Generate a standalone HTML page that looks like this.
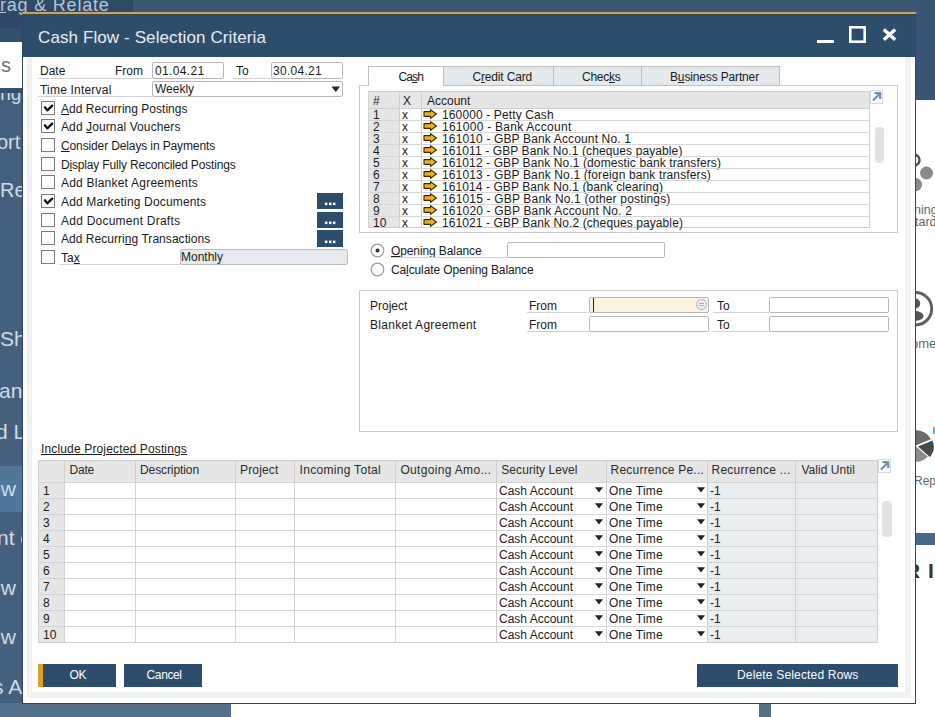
<!DOCTYPE html>
<html><head><meta charset="utf-8"><style>
html,body{margin:0;padding:0;width:935px;height:717px;overflow:hidden;background:#fff}
body{position:relative;font-family:"Liberation Sans", sans-serif}
body>div{position:absolute}
.t{white-space:pre}
u{text-decoration:underline}
</style></head><body>
<div style="left:0px;top:0px;width:935px;height:717px;background:#ffffff"></div>
<div style="left:0px;top:0px;width:935px;height:57px;background:#2e4a68"></div>
<div style="left:133px;top:0px;width:802px;height:12px;background:#3b5775"></div>
<div style="left:0px;top:0px;width:133px;height:12px;background:#2f4b69"></div>
<div style="left:0px;top:57px;width:22px;height:660px;background:#44607c"></div>
<div style="left:0px;top:42px;width:22px;height:46px;background:#ffffff"></div>
<div style="left:0px;top:466px;width:22px;height:46px;background:#4f779c"></div>
<div style="left:0px;top:703px;width:231px;height:14px;background:#54708c"></div>
<div style="left:916px;top:0px;width:19px;height:100px;background:#3a5674"></div>
<div style="left:916px;top:533px;width:19px;height:12px;background:#4a6888"></div>
<div style="left:759px;top:703px;width:12px;height:14px;background:#566f88"></div>
<div style="left:0px;top:28px;width:22px;height:14px;background:#33506e"></div>
<div class="t" style="left:0px;top:-5px;font-size:18px;line-height:20px;color:#b6c6d6;letter-spacing:0.8px">rag &amp; Relate</div>
<div style="left:0px;top:12px;width:6px;height:1px;background:#b6c6d6"></div>
<div class="t" style="left:1px;top:54px;font-size:20px;line-height:22px;color:#707070;">s</div>
<div class="t" style="left:-4px;top:83px;font-size:19px;line-height:21px;color:#d0dbe6;">ing</div>
<div style="left:0px;top:88px;width:22px;height:5px;background:#34506c"></div>
<div class="t" style="left:-3px;top:131px;font-size:20px;line-height:22px;color:#d0dbe6;">ort</div>
<div class="t" style="left:0px;top:179px;font-size:20px;line-height:22px;color:#d0dbe6;">Rep</div>
<div class="t" style="left:0px;top:327px;font-size:21px;line-height:23px;color:#d0dbe6;">Sh</div>
<div class="t" style="left:-1px;top:378.5px;font-size:21px;line-height:23px;color:#d0dbe6;">and</div>
<div class="t" style="left:-4px;top:420px;font-size:21px;line-height:23px;color:#d0dbe6;">d L</div>
<div class="t" style="left:-11px;top:477px;font-size:21px;line-height:23px;color:#d0dbe6;">ow</div>
<div class="t" style="left:-3px;top:526px;font-size:21px;line-height:23px;color:#d0dbe6;">nt c</div>
<div class="t" style="left:-11px;top:576px;font-size:21px;line-height:23px;color:#d0dbe6;">ow</div>
<div class="t" style="left:-11px;top:625px;font-size:21px;line-height:23px;color:#d0dbe6;">ow</div>
<div class="t" style="left:-7px;top:675px;font-size:21px;line-height:23px;color:#d0dbe6;">s A</div>
<svg style="position:absolute;left:900px;top:145px" width="35" height="50"><circle cx="14" cy="15" r="5.5" fill="none" stroke="#555" stroke-width="2.5"/><circle cx="26.5" cy="28" r="6.5" fill="#8a8a8a"/><circle cx="15.6" cy="39.6" r="6.5" fill="#8a8a8a"/></svg>
<div class="t" style="left:914px;top:203px;font-size:12.5px;line-height:14px;color:#666;">ning</div>
<div class="t" style="left:915px;top:215px;font-size:12.5px;line-height:14px;color:#666;">tard</div>
<svg style="position:absolute;left:895px;top:288px" width="40" height="42"><circle cx="20.5" cy="20.7" r="16.2" fill="none" stroke="#606060" stroke-width="3"/><circle cx="20" cy="15.4" r="5.2" fill="#555"/><ellipse cx="20" cy="28" rx="8.5" ry="5" fill="#555"/></svg>
<div class="t" style="left:911px;top:335.5px;font-size:13px;line-height:15px;color:#666;">ome</div>
<svg style="position:absolute;left:895px;top:425px" width="40" height="45"><path d="M21.5 21 L5 21 A16.5 16.5 0 0 1 36.8 14.8 Z" fill="#6a6a6a" stroke="#fff" stroke-width="1.5"/><path d="M21.5 21 L34.1 31.6 A16.5 16.5 0 0 1 5 21 Z" fill="#8c8c8c" stroke="#fff" stroke-width="1.5"/><path d="M23 21.5 L37.5 15.5 A16 16 0 0 1 34.8 32 Z" fill="#484848"/><rect x="38" y="2" width="2" height="7" fill="#5aaee0"/></svg>
<div class="t" style="left:914px;top:473.5px;font-size:12px;line-height:14px;color:#666;">Repo</div>
<div class="t" style="left:905px;top:558.5px;font-size:21px;line-height:23px;color:#333;font-weight:bold">R</div>
<div class="t" style="left:928px;top:558.5px;font-size:21px;line-height:23px;color:#333;font-weight:bold">In</div>
<div style="left:22px;top:13px;width:894px;height:691px;background:#2a4664"></div>
<div style="left:23px;top:14px;width:892px;height:43px;background:#2d4d6c"></div>
<div style="left:22px;top:12px;width:894px;height:2px;background:#d9a534"></div>
<div style="left:23px;top:57px;width:892px;height:646px;background:#ffffff"></div>
<div style="left:27px;top:57px;width:5px;height:641px;background:#f2f2f2"></div>
<div style="left:905px;top:57px;width:6px;height:641px;background:#f2f2f2"></div>
<div style="left:27px;top:692px;width:884px;height:6px;background:#f2f2f2"></div>
<div style="left:32px;top:57px;width:873px;height:635px;background:#ffffff"></div>
<div class="t" style="left:38px;top:28px;font-size:17px;line-height:19px;color:#e8eef4;;letter-spacing:0.105px">Cash Flow - Selection Criteria</div>
<div style="left:817px;top:40px;width:17px;height:3px;background:#ffffff"></div>
<svg style="position:absolute;left:848px;top:25px" width="19" height="19"><rect x="2.3" y="2.3" width="14.4" height="14.4" fill="none" stroke="#fff" stroke-width="2.6"/></svg>
<svg style="position:absolute;left:882px;top:28px" width="15" height="13"><path d="M1.8 1.5 L13.2 11.8 M13.2 1.5 L1.8 11.8" stroke="#fff" stroke-width="3.4"/></svg>
<div class="t" style="left:40px;top:64px;font-size:12px;line-height:14px;color:#1b1b1b;">Date</div>
<div class="t" style="left:115px;top:64px;font-size:12px;line-height:14px;color:#1b1b1b;">From</div>
<div style="left:38px;top:78px;width:114px;height:1px;background:#d2d2d2"></div>
<div style="left:152px;top:62px;width:72px;height:17px;background:#fff;border:1px solid #b8b8b8;box-sizing:border-box;border-radius:2px"></div>
<div class="t" style="left:155px;top:64px;font-size:12px;line-height:14px;color:#1b1b1b;;letter-spacing:0.348px">01.04.21</div>
<div class="t" style="left:236px;top:64px;font-size:12px;line-height:14px;color:#1b1b1b;">To</div>
<div style="left:233px;top:78px;width:38px;height:1px;background:#d2d2d2"></div>
<div style="left:271px;top:62px;width:72px;height:17px;background:#fff;border:1px solid #b8b8b8;box-sizing:border-box;border-radius:2px"></div>
<div class="t" style="left:273px;top:64px;font-size:12px;line-height:14px;color:#1b1b1b;;letter-spacing:0.285px">30.04.21</div>
<div class="t" style="left:40px;top:83px;font-size:12px;line-height:14px;color:#1b1b1b;;letter-spacing:0.200px">Time Interval</div>
<div style="left:38px;top:96px;width:114px;height:1px;background:#d2d2d2"></div>
<div style="left:152px;top:81px;width:191px;height:16px;background:#fff;border:1px solid #b8b8b8;box-sizing:border-box;border-radius:2px"></div>
<div class="t" style="left:155px;top:82px;font-size:12px;line-height:14px;color:#1b1b1b;">Weekly</div>
<svg style="position:absolute;left:331px;top:86px" width="10" height="7"><path d="M0.5 0.5 L9 0.5 L4.75 6 Z" fill="#222"/></svg>
<div style="left:41px;top:101px;width:14px;height:14px;background:#fff;border:1px solid #7a7a7a;box-sizing:border-box"></div>
<svg style="position:absolute;left:41px;top:101px" width="14" height="14"><path d="M3.9 6.3 L6.3 9.4 L11.2 4.6" fill="none" stroke="#111" stroke-width="2.3" stroke-linecap="round" stroke-linejoin="round"/></svg>
<div class="t" style="left:61px;top:102px;font-size:12px;line-height:14px;color:#1b1b1b;;letter-spacing:0.019px"><u>A</u>dd Recurring Postings</div>
<div style="left:41px;top:119px;width:14px;height:14px;background:#fff;border:1px solid #7a7a7a;box-sizing:border-box"></div>
<svg style="position:absolute;left:41px;top:119px" width="14" height="14"><path d="M3.9 6.3 L6.3 9.4 L11.2 4.6" fill="none" stroke="#111" stroke-width="2.3" stroke-linecap="round" stroke-linejoin="round"/></svg>
<div class="t" style="left:61px;top:120px;font-size:12px;line-height:14px;color:#1b1b1b;;letter-spacing:0.104px">Add <u>J</u>ournal Vouchers</div>
<div style="left:41px;top:138px;width:14px;height:14px;background:#fff;border:1px solid #7a7a7a;box-sizing:border-box"></div>
<div class="t" style="left:61px;top:139px;font-size:12px;line-height:14px;color:#1b1b1b;;letter-spacing:-0.126px"><u>C</u>onsider Delays in Payments</div>
<div style="left:41px;top:157px;width:14px;height:14px;background:#fff;border:1px solid #7a7a7a;box-sizing:border-box"></div>
<div class="t" style="left:61px;top:158px;font-size:12px;line-height:14px;color:#1b1b1b;;letter-spacing:-0.170px">D<u>i</u>splay Fully Reconciled Postings</div>
<div style="left:41px;top:175px;width:14px;height:14px;background:#fff;border:1px solid #7a7a7a;box-sizing:border-box"></div>
<div class="t" style="left:61px;top:176px;font-size:12px;line-height:14px;color:#1b1b1b;;letter-spacing:0.223px">Add Blanket Agreements</div>
<div style="left:41px;top:194px;width:14px;height:14px;background:#fff;border:1px solid #7a7a7a;box-sizing:border-box"></div>
<svg style="position:absolute;left:41px;top:194px" width="14" height="14"><path d="M3.9 6.3 L6.3 9.4 L11.2 4.6" fill="none" stroke="#111" stroke-width="2.3" stroke-linecap="round" stroke-linejoin="round"/></svg>
<div class="t" style="left:61px;top:195px;font-size:12px;line-height:14px;color:#1b1b1b;;letter-spacing:0.169px">Add Marketing Documents</div>
<div style="left:41px;top:213px;width:14px;height:14px;background:#fff;border:1px solid #7a7a7a;box-sizing:border-box"></div>
<div class="t" style="left:61px;top:214px;font-size:12px;line-height:14px;color:#1b1b1b;;letter-spacing:0.236px">Add Document Drafts</div>
<div style="left:41px;top:231px;width:14px;height:14px;background:#fff;border:1px solid #7a7a7a;box-sizing:border-box"></div>
<div class="t" style="left:61px;top:232px;font-size:12px;line-height:14px;color:#1b1b1b;;letter-spacing:0.043px">Add Recurri<u>n</u>g Transactions</div>
<div style="left:41px;top:250px;width:14px;height:14px;background:#fff;border:1px solid #7a7a7a;box-sizing:border-box"></div>
<div class="t" style="left:61px;top:251px;font-size:12px;line-height:14px;color:#1b1b1b;">Ta<u>x</u></div>
<div style="left:60px;top:264px;width:120px;height:1px;background:#d2d2d2"></div>
<div style="left:317px;top:193px;width:26px;height:16px;background:#2d4d6c"></div>
<svg style="position:absolute;left:324px;top:202px" width="12" height="4"><rect x="0.9" y="0.6" width="2.5" height="2.5" fill="#fff"/><rect x="5" y="0.6" width="2.5" height="2.5" fill="#fff"/><rect x="8.9" y="0.6" width="2.5" height="2.5" fill="#fff"/></svg>
<div style="left:317px;top:212px;width:26px;height:16px;background:#2d4d6c"></div>
<svg style="position:absolute;left:324px;top:221px" width="12" height="4"><rect x="0.9" y="0.6" width="2.5" height="2.5" fill="#fff"/><rect x="5" y="0.6" width="2.5" height="2.5" fill="#fff"/><rect x="8.9" y="0.6" width="2.5" height="2.5" fill="#fff"/></svg>
<div style="left:317px;top:230px;width:26px;height:17px;background:#2d4d6c"></div>
<svg style="position:absolute;left:324px;top:240px" width="12" height="4"><rect x="0.9" y="0.6" width="2.5" height="2.5" fill="#fff"/><rect x="5" y="0.6" width="2.5" height="2.5" fill="#fff"/><rect x="8.9" y="0.6" width="2.5" height="2.5" fill="#fff"/></svg>
<div style="left:180px;top:249px;width:168px;height:16px;background:#e6eaee;border:1px solid #b8bcc0;box-sizing:border-box;border-radius:2px"></div>
<div class="t" style="left:181px;top:250px;font-size:12px;line-height:14px;color:#1b1b1b;">Monthly</div>
<div style="left:359px;top:85px;width:539px;height:148px;border:1px solid #c8c8c8;box-sizing:border-box;background:#fff"></div>
<div style="left:443px;top:66px;width:111px;height:20px;background:#e4e9ee;border:1px solid #c0c0c0;box-sizing:border-box"></div>
<div class="t" style="left:472.5px;top:70px;font-size:12px;line-height:14px;color:#1b1b1b;;letter-spacing:-0.170px">C<u>r</u>edit Card</div>
<div style="left:553px;top:66px;width:89px;height:20px;background:#e4e9ee;border:1px solid #c0c0c0;box-sizing:border-box"></div>
<div class="t" style="left:582px;top:70px;font-size:12px;line-height:14px;color:#1b1b1b;;letter-spacing:-0.253px">Chec<u>k</u>s</div>
<div style="left:641px;top:66px;width:139px;height:20px;background:#e4e9ee;border:1px solid #c0c0c0;box-sizing:border-box"></div>
<div class="t" style="left:670px;top:70px;font-size:12px;line-height:14px;color:#1b1b1b;;letter-spacing:-0.150px">B<u>u</u>siness Partner</div>
<div style="left:368px;top:66px;width:76px;height:20px;background:#fff;border:1px solid #c0c0c0;border-bottom:none;box-sizing:border-box"></div>
<div style="left:369px;top:85px;width:74px;height:1px;background:#fff"></div>
<div class="t" style="left:398.5px;top:70px;font-size:12px;line-height:14px;color:#1b1b1b;;letter-spacing:-0.883px">Ca<u>s</u>h</div>
<div style="left:368px;top:91px;width:502px;height:17px;background:#e6e6e6"></div>
<div style="left:368px;top:108px;width:31px;height:120px;background:#e6e6e6"></div>
<div style="left:368px;top:91px;width:502px;height:137px;border:1px solid #d0d0d0;box-sizing:border-box"></div>
<div style="left:399px;top:91px;width:1px;height:137px;background:#d0d0d0"></div>
<div style="left:421px;top:91px;width:1px;height:137px;background:#d0d0d0"></div>
<div style="left:368px;top:108px;width:502px;height:1px;background:#d0d0d0"></div>
<div class="t" style="left:373px;top:94px;font-size:12px;line-height:14px;color:#1b1b1b;">#</div>
<div class="t" style="left:403px;top:94px;font-size:12px;line-height:14px;color:#1b1b1b;">X</div>
<div class="t" style="left:427px;top:94px;font-size:12px;line-height:14px;color:#1b1b1b;">Account</div>
<div class="t" style="left:373px;top:108px;font-size:12px;line-height:14px;color:#1b1b1b;">1</div>
<div class="t" style="left:402px;top:108px;font-size:12px;line-height:14px;color:#1b1b1b;">x</div>
<svg style="position:absolute;left:423px;top:109px" width="15" height="11"><path d="M1 2.6 L7.6 2.6 L7.6 0.6 L13.4 5 L7.6 9.4 L7.6 7.4 L1 7.4 Z" fill="#f2ae14" stroke="#3a2c08" stroke-width="1.1" stroke-linejoin="round"/></svg>
<div class="t" style="left:442px;top:108px;font-size:12px;line-height:14px;color:#1b1b1b;;letter-spacing:0.126px">160000 - Petty Cash</div>
<div style="left:368px;top:120px;width:502px;height:1px;background:#d6d6d6"></div>
<div class="t" style="left:373px;top:120px;font-size:12px;line-height:14px;color:#1b1b1b;">2</div>
<div class="t" style="left:402px;top:120px;font-size:12px;line-height:14px;color:#1b1b1b;">x</div>
<svg style="position:absolute;left:423px;top:121px" width="15" height="11"><path d="M1 2.6 L7.6 2.6 L7.6 0.6 L13.4 5 L7.6 9.4 L7.6 7.4 L1 7.4 Z" fill="#f2ae14" stroke="#3a2c08" stroke-width="1.1" stroke-linejoin="round"/></svg>
<div class="t" style="left:442px;top:120px;font-size:12px;line-height:14px;color:#1b1b1b;;letter-spacing:0.257px">161000 - Bank Account</div>
<div style="left:368px;top:132px;width:502px;height:1px;background:#d6d6d6"></div>
<div class="t" style="left:373px;top:132px;font-size:12px;line-height:14px;color:#1b1b1b;">3</div>
<div class="t" style="left:402px;top:132px;font-size:12px;line-height:14px;color:#1b1b1b;">x</div>
<svg style="position:absolute;left:423px;top:133px" width="15" height="11"><path d="M1 2.6 L7.6 2.6 L7.6 0.6 L13.4 5 L7.6 9.4 L7.6 7.4 L1 7.4 Z" fill="#f2ae14" stroke="#3a2c08" stroke-width="1.1" stroke-linejoin="round"/></svg>
<div class="t" style="left:442px;top:132px;font-size:12px;line-height:14px;color:#1b1b1b;;letter-spacing:0.143px">161010 - GBP Bank Account No. 1</div>
<div style="left:368px;top:144px;width:502px;height:1px;background:#d6d6d6"></div>
<div class="t" style="left:373px;top:144px;font-size:12px;line-height:14px;color:#1b1b1b;">4</div>
<div class="t" style="left:402px;top:144px;font-size:12px;line-height:14px;color:#1b1b1b;">x</div>
<svg style="position:absolute;left:423px;top:145px" width="15" height="11"><path d="M1 2.6 L7.6 2.6 L7.6 0.6 L13.4 5 L7.6 9.4 L7.6 7.4 L1 7.4 Z" fill="#f2ae14" stroke="#3a2c08" stroke-width="1.1" stroke-linejoin="round"/></svg>
<div class="t" style="left:442px;top:144px;font-size:12px;line-height:14px;color:#1b1b1b;;letter-spacing:0.103px">161011 - GBP Bank No.1 (cheques payable)</div>
<div style="left:368px;top:156px;width:502px;height:1px;background:#d6d6d6"></div>
<div class="t" style="left:373px;top:156px;font-size:12px;line-height:14px;color:#1b1b1b;">5</div>
<div class="t" style="left:402px;top:156px;font-size:12px;line-height:14px;color:#1b1b1b;">x</div>
<svg style="position:absolute;left:423px;top:157px" width="15" height="11"><path d="M1 2.6 L7.6 2.6 L7.6 0.6 L13.4 5 L7.6 9.4 L7.6 7.4 L1 7.4 Z" fill="#f2ae14" stroke="#3a2c08" stroke-width="1.1" stroke-linejoin="round"/></svg>
<div class="t" style="left:442px;top:156px;font-size:12px;line-height:14px;color:#1b1b1b;;letter-spacing:0.106px">161012 - GBP Bank No.1 (domestic bank transfers)</div>
<div style="left:368px;top:168px;width:502px;height:1px;background:#d6d6d6"></div>
<div class="t" style="left:373px;top:168px;font-size:12px;line-height:14px;color:#1b1b1b;">6</div>
<div class="t" style="left:402px;top:168px;font-size:12px;line-height:14px;color:#1b1b1b;">x</div>
<svg style="position:absolute;left:423px;top:169px" width="15" height="11"><path d="M1 2.6 L7.6 2.6 L7.6 0.6 L13.4 5 L7.6 9.4 L7.6 7.4 L1 7.4 Z" fill="#f2ae14" stroke="#3a2c08" stroke-width="1.1" stroke-linejoin="round"/></svg>
<div class="t" style="left:442px;top:168px;font-size:12px;line-height:14px;color:#1b1b1b;;letter-spacing:0.136px">161013 - GBP Bank No.1 (foreign bank transfers)</div>
<div style="left:368px;top:180px;width:502px;height:1px;background:#d6d6d6"></div>
<div class="t" style="left:373px;top:180px;font-size:12px;line-height:14px;color:#1b1b1b;">7</div>
<div class="t" style="left:402px;top:180px;font-size:12px;line-height:14px;color:#1b1b1b;">x</div>
<svg style="position:absolute;left:423px;top:181px" width="15" height="11"><path d="M1 2.6 L7.6 2.6 L7.6 0.6 L13.4 5 L7.6 9.4 L7.6 7.4 L1 7.4 Z" fill="#f2ae14" stroke="#3a2c08" stroke-width="1.1" stroke-linejoin="round"/></svg>
<div class="t" style="left:442px;top:180px;font-size:12px;line-height:14px;color:#1b1b1b;;letter-spacing:0.081px">161014 - GBP Bank No.1 (bank clearing)</div>
<div style="left:368px;top:192px;width:502px;height:1px;background:#d6d6d6"></div>
<div class="t" style="left:373px;top:192px;font-size:12px;line-height:14px;color:#1b1b1b;">8</div>
<div class="t" style="left:402px;top:192px;font-size:12px;line-height:14px;color:#1b1b1b;">x</div>
<svg style="position:absolute;left:423px;top:193px" width="15" height="11"><path d="M1 2.6 L7.6 2.6 L7.6 0.6 L13.4 5 L7.6 9.4 L7.6 7.4 L1 7.4 Z" fill="#f2ae14" stroke="#3a2c08" stroke-width="1.1" stroke-linejoin="round"/></svg>
<div class="t" style="left:442px;top:192px;font-size:12px;line-height:14px;color:#1b1b1b;;letter-spacing:0.169px">161015 - GBP Bank No.1 (other postings)</div>
<div style="left:368px;top:204px;width:502px;height:1px;background:#d6d6d6"></div>
<div class="t" style="left:373px;top:204px;font-size:12px;line-height:14px;color:#1b1b1b;">9</div>
<div class="t" style="left:402px;top:204px;font-size:12px;line-height:14px;color:#1b1b1b;">x</div>
<svg style="position:absolute;left:423px;top:205px" width="15" height="11"><path d="M1 2.6 L7.6 2.6 L7.6 0.6 L13.4 5 L7.6 9.4 L7.6 7.4 L1 7.4 Z" fill="#f2ae14" stroke="#3a2c08" stroke-width="1.1" stroke-linejoin="round"/></svg>
<div class="t" style="left:442px;top:204px;font-size:12px;line-height:14px;color:#1b1b1b;;letter-spacing:0.175px">161020 - GBP Bank Account No. 2</div>
<div style="left:368px;top:216px;width:502px;height:1px;background:#d6d6d6"></div>
<div class="t" style="left:373px;top:216px;font-size:12px;line-height:14px;color:#1b1b1b;">10</div>
<div class="t" style="left:402px;top:216px;font-size:12px;line-height:14px;color:#1b1b1b;">x</div>
<svg style="position:absolute;left:423px;top:217px" width="15" height="11"><path d="M1 2.6 L7.6 2.6 L7.6 0.6 L13.4 5 L7.6 9.4 L7.6 7.4 L1 7.4 Z" fill="#f2ae14" stroke="#3a2c08" stroke-width="1.1" stroke-linejoin="round"/></svg>
<div class="t" style="left:442px;top:216px;font-size:12px;line-height:14px;color:#1b1b1b;;letter-spacing:0.093px">161021 - GBP Bank No.2 (cheques payable)</div>
<svg style="position:absolute;left:870px;top:90px" width="13" height="14"><rect x="0.5" y="0.5" width="12" height="13" fill="#fff" stroke="#d4dae0"/><path d="M3 10.5 L9.5 4 M4.5 3.2 L10.2 3.2 L10.2 9" fill="none" stroke="#6f8fae" stroke-width="2.2"/></svg>
<div style="left:875px;top:127px;width:9px;height:36px;background:#e2e2e2;border-radius:4px"></div>
<svg style="position:absolute;left:370px;top:243px" width="15" height="15"><circle cx="7.5" cy="7.5" r="6.3" fill="#fff" stroke="#9c9c9c" stroke-width="1.2"/><circle cx="7.5" cy="7.5" r="2" fill="#333"/></svg>
<svg style="position:absolute;left:370px;top:262px" width="15" height="15"><circle cx="7.5" cy="7.5" r="6.3" fill="#fff" stroke="#9c9c9c" stroke-width="1.2"/></svg>
<div class="t" style="left:391px;top:244px;font-size:12px;line-height:14px;color:#1b1b1b;;letter-spacing:-0.105px"><u>O</u>pening Balance</div>
<div style="left:391px;top:257px;width:116px;height:1px;background:#d2d2d2"></div>
<div style="left:507px;top:242px;width:158px;height:16px;background:#fff;border:1px solid #b8b8b8;box-sizing:border-box;border-radius:2px"></div>
<div class="t" style="left:391px;top:263px;font-size:12px;line-height:14px;color:#1b1b1b;;letter-spacing:-0.118px">Ca<u>l</u>culate Opening Balance</div>
<div style="left:359px;top:290px;width:539px;height:142px;border:1px solid #c8c8c8;box-sizing:border-box"></div>
<div class="t" style="left:370px;top:299px;font-size:12px;line-height:14px;color:#1b1b1b;">Project</div>
<div class="t" style="left:370px;top:318px;font-size:12px;line-height:14px;color:#1b1b1b;;letter-spacing:0.300px">Blanket Agreement</div>
<div class="t" style="left:529px;top:299px;font-size:12px;line-height:14px;color:#1b1b1b;">From</div>
<div class="t" style="left:529px;top:318px;font-size:12px;line-height:14px;color:#1b1b1b;">From</div>
<div style="left:527px;top:312px;width:62px;height:1px;background:#d2d2d2"></div>
<div style="left:527px;top:331px;width:62px;height:1px;background:#d2d2d2"></div>
<div style="left:589px;top:297px;width:120px;height:16px;background:#fcf3df;border:1px solid #b8b8b8;box-sizing:border-box;border-radius:2px"></div>
<div style="left:593px;top:298px;width:1px;height:14px;background:#222"></div>
<svg style="position:absolute;left:695px;top:298px" width="13" height="13"><circle cx="6.5" cy="6.5" r="5" fill="#eef0f2" stroke="#a8b0b8"/><path d="M4 5.5 H9 M4 7.5 H9" stroke="#a8b0b8"/></svg>
<div style="left:589px;top:316px;width:120px;height:16px;background:#fff;border:1px solid #b8b8b8;box-sizing:border-box;border-radius:2px"></div>
<div class="t" style="left:717px;top:299px;font-size:12px;line-height:14px;color:#1b1b1b;">To</div>
<div class="t" style="left:717px;top:318px;font-size:12px;line-height:14px;color:#1b1b1b;">To</div>
<div style="left:713px;top:312px;width:56px;height:1px;background:#d2d2d2"></div>
<div style="left:713px;top:331px;width:56px;height:1px;background:#d2d2d2"></div>
<div style="left:769px;top:297px;width:120px;height:16px;background:#fff;border:1px solid #b8b8b8;box-sizing:border-box;border-radius:2px"></div>
<div style="left:769px;top:316px;width:120px;height:16px;background:#fff;border:1px solid #b8b8b8;box-sizing:border-box;border-radius:2px"></div>
<div class="t" style="left:41px;top:442px;font-size:12px;line-height:14px;color:#1b1b1b;text-decoration:underline;letter-spacing:0.150px">Include Projected Postings</div>
<div style="left:38px;top:460px;width:840px;height:22px;background:#e6e6e6"></div>
<div style="left:38px;top:482px;width:26px;height:160px;background:#e6e6e6"></div>
<div style="left:708px;top:482px;width:170px;height:160px;background:#e8edf2"></div>
<div style="left:38px;top:460px;width:840px;height:183px;border:1px solid #cfcfcf;box-sizing:border-box"></div>
<div style="left:64px;top:460px;width:1px;height:183px;background:#d0d0d0"></div>
<div style="left:135px;top:460px;width:1px;height:183px;background:#d0d0d0"></div>
<div style="left:235px;top:460px;width:1px;height:183px;background:#d0d0d0"></div>
<div style="left:294px;top:460px;width:1px;height:183px;background:#d0d0d0"></div>
<div style="left:395px;top:460px;width:1px;height:183px;background:#d0d0d0"></div>
<div style="left:496px;top:460px;width:1px;height:183px;background:#d0d0d0"></div>
<div style="left:606px;top:460px;width:1px;height:183px;background:#d0d0d0"></div>
<div style="left:707px;top:460px;width:1px;height:183px;background:#d0d0d0"></div>
<div style="left:795px;top:460px;width:1px;height:183px;background:#d0d0d0"></div>
<div class="t" style="left:69.5px;top:463px;font-size:12px;line-height:14px;color:#2a2a2a;;letter-spacing:-0.215px">Date</div>
<div class="t" style="left:140px;top:463px;font-size:12px;line-height:14px;color:#2a2a2a;;letter-spacing:-0.094px">Description</div>
<div class="t" style="left:240px;top:463px;font-size:12px;line-height:14px;color:#2a2a2a;;letter-spacing:0.163px">Project</div>
<div class="t" style="left:299.5px;top:463px;font-size:12px;line-height:14px;color:#2a2a2a;;letter-spacing:0.310px">Incoming Total</div>
<div class="t" style="left:400.4px;top:463px;font-size:12px;line-height:14px;color:#2a2a2a;;letter-spacing:0.329px">Outgoing Amo...</div>
<div class="t" style="left:501.3px;top:463px;font-size:12px;line-height:14px;color:#2a2a2a;;letter-spacing:0.066px">Security Level</div>
<div class="t" style="left:610.6px;top:463px;font-size:12px;line-height:14px;color:#2a2a2a;;letter-spacing:0.210px">Recurrence Pe...</div>
<div class="t" style="left:711.5px;top:463px;font-size:12px;line-height:14px;color:#2a2a2a;;letter-spacing:0.259px">Recurrence ...</div>
<div class="t" style="left:801.4px;top:463px;font-size:12px;line-height:14px;color:#2a2a2a;;letter-spacing:0.042px">Valid Until</div>
<div style="left:38px;top:482px;width:840px;height:1px;background:#d4d4d4"></div>
<div class="t" style="left:43px;top:484px;font-size:12px;line-height:14px;color:#1b1b1b;">1</div>
<div class="t" style="left:499px;top:484px;font-size:12px;line-height:14px;color:#1b1b1b;">Cash Account</div>
<svg style="position:absolute;left:595px;top:487px" width="9" height="6"><path d="M0 0.3 L8 0.3 L4 5.5 Z" fill="#222"/></svg>
<div class="t" style="left:609px;top:484px;font-size:12px;line-height:14px;color:#1b1b1b;;letter-spacing:0.246px">One Time</div>
<svg style="position:absolute;left:697px;top:487px" width="9" height="6"><path d="M0 0.3 L8 0.3 L4 5.5 Z" fill="#222"/></svg>
<div class="t" style="left:710px;top:484px;font-size:12px;line-height:14px;color:#1b1b1b;">-1</div>
<div style="left:38px;top:498px;width:840px;height:1px;background:#d4d4d4"></div>
<div class="t" style="left:43px;top:500px;font-size:12px;line-height:14px;color:#1b1b1b;">2</div>
<div class="t" style="left:499px;top:500px;font-size:12px;line-height:14px;color:#1b1b1b;">Cash Account</div>
<svg style="position:absolute;left:595px;top:503px" width="9" height="6"><path d="M0 0.3 L8 0.3 L4 5.5 Z" fill="#222"/></svg>
<div class="t" style="left:609px;top:500px;font-size:12px;line-height:14px;color:#1b1b1b;;letter-spacing:0.246px">One Time</div>
<svg style="position:absolute;left:697px;top:503px" width="9" height="6"><path d="M0 0.3 L8 0.3 L4 5.5 Z" fill="#222"/></svg>
<div class="t" style="left:710px;top:500px;font-size:12px;line-height:14px;color:#1b1b1b;">-1</div>
<div style="left:38px;top:514px;width:840px;height:1px;background:#d4d4d4"></div>
<div class="t" style="left:43px;top:516px;font-size:12px;line-height:14px;color:#1b1b1b;">3</div>
<div class="t" style="left:499px;top:516px;font-size:12px;line-height:14px;color:#1b1b1b;">Cash Account</div>
<svg style="position:absolute;left:595px;top:519px" width="9" height="6"><path d="M0 0.3 L8 0.3 L4 5.5 Z" fill="#222"/></svg>
<div class="t" style="left:609px;top:516px;font-size:12px;line-height:14px;color:#1b1b1b;;letter-spacing:0.246px">One Time</div>
<svg style="position:absolute;left:697px;top:519px" width="9" height="6"><path d="M0 0.3 L8 0.3 L4 5.5 Z" fill="#222"/></svg>
<div class="t" style="left:710px;top:516px;font-size:12px;line-height:14px;color:#1b1b1b;">-1</div>
<div style="left:38px;top:530px;width:840px;height:1px;background:#d4d4d4"></div>
<div class="t" style="left:43px;top:532px;font-size:12px;line-height:14px;color:#1b1b1b;">4</div>
<div class="t" style="left:499px;top:532px;font-size:12px;line-height:14px;color:#1b1b1b;">Cash Account</div>
<svg style="position:absolute;left:595px;top:535px" width="9" height="6"><path d="M0 0.3 L8 0.3 L4 5.5 Z" fill="#222"/></svg>
<div class="t" style="left:609px;top:532px;font-size:12px;line-height:14px;color:#1b1b1b;;letter-spacing:0.246px">One Time</div>
<svg style="position:absolute;left:697px;top:535px" width="9" height="6"><path d="M0 0.3 L8 0.3 L4 5.5 Z" fill="#222"/></svg>
<div class="t" style="left:710px;top:532px;font-size:12px;line-height:14px;color:#1b1b1b;">-1</div>
<div style="left:38px;top:546px;width:840px;height:1px;background:#d4d4d4"></div>
<div class="t" style="left:43px;top:548px;font-size:12px;line-height:14px;color:#1b1b1b;">5</div>
<div class="t" style="left:499px;top:548px;font-size:12px;line-height:14px;color:#1b1b1b;">Cash Account</div>
<svg style="position:absolute;left:595px;top:551px" width="9" height="6"><path d="M0 0.3 L8 0.3 L4 5.5 Z" fill="#222"/></svg>
<div class="t" style="left:609px;top:548px;font-size:12px;line-height:14px;color:#1b1b1b;;letter-spacing:0.246px">One Time</div>
<svg style="position:absolute;left:697px;top:551px" width="9" height="6"><path d="M0 0.3 L8 0.3 L4 5.5 Z" fill="#222"/></svg>
<div class="t" style="left:710px;top:548px;font-size:12px;line-height:14px;color:#1b1b1b;">-1</div>
<div style="left:38px;top:562px;width:840px;height:1px;background:#d4d4d4"></div>
<div class="t" style="left:43px;top:564px;font-size:12px;line-height:14px;color:#1b1b1b;">6</div>
<div class="t" style="left:499px;top:564px;font-size:12px;line-height:14px;color:#1b1b1b;">Cash Account</div>
<svg style="position:absolute;left:595px;top:567px" width="9" height="6"><path d="M0 0.3 L8 0.3 L4 5.5 Z" fill="#222"/></svg>
<div class="t" style="left:609px;top:564px;font-size:12px;line-height:14px;color:#1b1b1b;;letter-spacing:0.246px">One Time</div>
<svg style="position:absolute;left:697px;top:567px" width="9" height="6"><path d="M0 0.3 L8 0.3 L4 5.5 Z" fill="#222"/></svg>
<div class="t" style="left:710px;top:564px;font-size:12px;line-height:14px;color:#1b1b1b;">-1</div>
<div style="left:38px;top:578px;width:840px;height:1px;background:#d4d4d4"></div>
<div class="t" style="left:43px;top:580px;font-size:12px;line-height:14px;color:#1b1b1b;">7</div>
<div class="t" style="left:499px;top:580px;font-size:12px;line-height:14px;color:#1b1b1b;">Cash Account</div>
<svg style="position:absolute;left:595px;top:583px" width="9" height="6"><path d="M0 0.3 L8 0.3 L4 5.5 Z" fill="#222"/></svg>
<div class="t" style="left:609px;top:580px;font-size:12px;line-height:14px;color:#1b1b1b;;letter-spacing:0.246px">One Time</div>
<svg style="position:absolute;left:697px;top:583px" width="9" height="6"><path d="M0 0.3 L8 0.3 L4 5.5 Z" fill="#222"/></svg>
<div class="t" style="left:710px;top:580px;font-size:12px;line-height:14px;color:#1b1b1b;">-1</div>
<div style="left:38px;top:594px;width:840px;height:1px;background:#d4d4d4"></div>
<div class="t" style="left:43px;top:596px;font-size:12px;line-height:14px;color:#1b1b1b;">8</div>
<div class="t" style="left:499px;top:596px;font-size:12px;line-height:14px;color:#1b1b1b;">Cash Account</div>
<svg style="position:absolute;left:595px;top:599px" width="9" height="6"><path d="M0 0.3 L8 0.3 L4 5.5 Z" fill="#222"/></svg>
<div class="t" style="left:609px;top:596px;font-size:12px;line-height:14px;color:#1b1b1b;;letter-spacing:0.246px">One Time</div>
<svg style="position:absolute;left:697px;top:599px" width="9" height="6"><path d="M0 0.3 L8 0.3 L4 5.5 Z" fill="#222"/></svg>
<div class="t" style="left:710px;top:596px;font-size:12px;line-height:14px;color:#1b1b1b;">-1</div>
<div style="left:38px;top:610px;width:840px;height:1px;background:#d4d4d4"></div>
<div class="t" style="left:43px;top:612px;font-size:12px;line-height:14px;color:#1b1b1b;">9</div>
<div class="t" style="left:499px;top:612px;font-size:12px;line-height:14px;color:#1b1b1b;">Cash Account</div>
<svg style="position:absolute;left:595px;top:615px" width="9" height="6"><path d="M0 0.3 L8 0.3 L4 5.5 Z" fill="#222"/></svg>
<div class="t" style="left:609px;top:612px;font-size:12px;line-height:14px;color:#1b1b1b;;letter-spacing:0.246px">One Time</div>
<svg style="position:absolute;left:697px;top:615px" width="9" height="6"><path d="M0 0.3 L8 0.3 L4 5.5 Z" fill="#222"/></svg>
<div class="t" style="left:710px;top:612px;font-size:12px;line-height:14px;color:#1b1b1b;">-1</div>
<div style="left:38px;top:626px;width:840px;height:1px;background:#d4d4d4"></div>
<div class="t" style="left:43px;top:628px;font-size:12px;line-height:14px;color:#1b1b1b;">10</div>
<div class="t" style="left:499px;top:628px;font-size:12px;line-height:14px;color:#1b1b1b;">Cash Account</div>
<svg style="position:absolute;left:595px;top:631px" width="9" height="6"><path d="M0 0.3 L8 0.3 L4 5.5 Z" fill="#222"/></svg>
<div class="t" style="left:609px;top:628px;font-size:12px;line-height:14px;color:#1b1b1b;;letter-spacing:0.246px">One Time</div>
<svg style="position:absolute;left:697px;top:631px" width="9" height="6"><path d="M0 0.3 L8 0.3 L4 5.5 Z" fill="#222"/></svg>
<div class="t" style="left:710px;top:628px;font-size:12px;line-height:14px;color:#1b1b1b;">-1</div>
<svg style="position:absolute;left:878px;top:459px" width="13" height="14"><rect x="0.5" y="0.5" width="12" height="13" fill="#fff" stroke="#d4dae0"/><path d="M3 10.5 L9.5 4 M4.5 3.2 L10.2 3.2 L10.2 9" fill="none" stroke="#6f8fae" stroke-width="2.2"/></svg>
<div style="left:882px;top:501px;width:10px;height:36px;background:#e2e2e2;border-radius:4px"></div>
<div style="left:38px;top:664px;width:78px;height:23px;background:#2d4d6c"></div>
<div style="left:38px;top:664px;width:5px;height:23px;background:#e0a020"></div>
<div class="t" style="left:69.6px;top:668px;font-size:12px;line-height:14px;color:#ffffff;;letter-spacing:-0.372px">OK</div>
<div style="left:124px;top:664px;width:78px;height:23px;background:#2d4d6c"></div>
<div class="t" style="left:146.6px;top:668px;font-size:12px;line-height:14px;color:#ffffff;;letter-spacing:-0.393px">Cancel</div>
<div style="left:697px;top:664px;width:201px;height:23px;background:#2d4d6c"></div>
<div class="t" style="left:737px;top:668px;font-size:12px;line-height:14px;color:#ffffff;;letter-spacing:0.172px">Delete Selected Rows</div>
</body></html>
